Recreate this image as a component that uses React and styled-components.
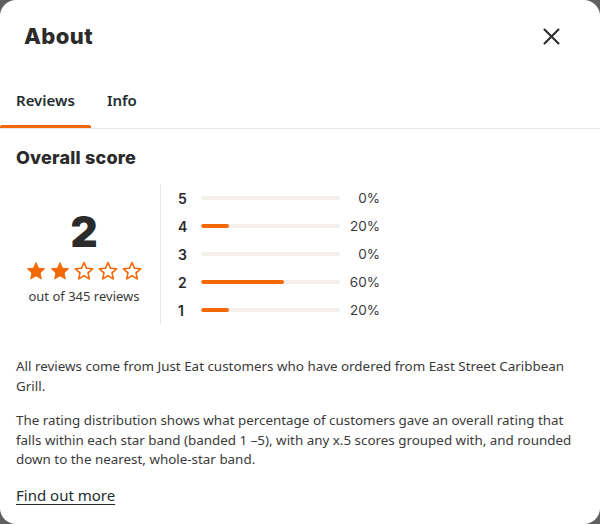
import styled, { createGlobalStyle } from "styled-components";

const GlobalStyle = createGlobalStyle`
  html, body {
    margin: 0;
    padding: 0;
    background: #5f5f5f;
  }
  body {
    font-family: "Noto Sans", "Open Sans", sans-serif;
    color: #242e30;
  }
`;

const orange = "#f36805";

const Modal = styled.div`
  width: 600px;
  height: 524px;
  background: #fff;
  border-radius: 16px;
  overflow: hidden;
  box-sizing: border-box;
`;

const Header = styled.header`
  display: flex;
  justify-content: space-between;
  align-items: center;
  height: 72px;
  padding: 0 34px 0 24px;
`;

const Title = styled.h1`
  margin: 0;
  font-family: "Inter", sans-serif;
  font-weight: 800;
  font-size: 22px;
  letter-spacing: 0.4px;
  color: #2b2b2b;
`;

const CloseButton = styled.button`
  border: none;
  background: none;
  padding: 0;
  width: 30px;
  height: 30px;
  display: flex;
  align-items: center;
  justify-content: center;
  cursor: pointer;
  color: #2b2b2b;
`;

const TabList = styled.nav`
  display: flex;
  height: 56px;
  border-bottom: 1px solid #e8e8e8;
`;

const Tab = styled.button`
  border: none;
  background: none;
  padding: 0 16px;
  font-family: "Noto Sans", sans-serif;
  font-size: 15px;
  font-weight: 600;
  color: #242e30;
  position: relative;
  cursor: pointer;

  &::after {
    content: "";
    position: absolute;
    left: 0;
    right: 0;
    bottom: 0;
    height: 3px;
    border-radius: 2px 2px 0 0;
    background: ${(p) => (p.$active ? orange : "transparent")};
  }
`;

const Content = styled.section`
  padding: 17px 16px 0;
`;

const SectionTitle = styled.h2`
  margin: 0;
  font-family: "Inter", sans-serif;
  font-weight: 800;
  font-size: 18px;
  letter-spacing: 0.2px;
  line-height: 24px;
  color: #2b2b2b;
`;

const ScoreBlock = styled.div`
  display: flex;
  margin-top: 14px;
`;

const Summary = styled.div`
  width: 136px;
  padding-right: 8px;
  border-right: 1px solid #e8e8e8;
  display: flex;
  flex-direction: column;
  align-items: center;
  justify-content: center;
  padding-top: 6px;
`;

const BigScore = styled.div`
  font-family: "Inter", sans-serif;
  font-weight: 900;
  font-size: 42px;
  line-height: 44px;
  color: #2b2b2b;
`;

const Stars = styled.div`
  display: flex;
  gap: 4px;
  margin-top: 7px;
`;

const ReviewCount = styled.div`
  margin-top: 6px;
  font-size: 13px;
  color: #3a3a3a;
`;

const Distribution = styled.div`
  padding-left: 17px;
  display: flex;
  flex-direction: column;
`;

const Row = styled.div`
  display: grid;
  grid-template-columns: 23px 139px 40px;
  align-items: center;
  height: 28px;
`;

const Band = styled.span`
  font-family: "Inter", sans-serif;
  font-weight: 600;
  font-size: 14px;
  color: #2b2b2b;
`;

const Track = styled.div`
  height: 4px;
  border-radius: 2px;
  background: #f3f0ec;
  overflow: hidden;
`;

const Fill = styled.div`
  height: 100%;
  border-radius: 2px;
  background: ${orange};
`;

const Percent = styled.span`
  text-align: right;
  font-family: "Inter", sans-serif;
  font-size: 13.5px;
  color: #3a3a3a;
`;

const Paragraph = styled.p`
  margin: ${(p) => (p.$first ? "33px" : "14.6px")} 0 0;
  font-size: 13.4px;
  line-height: 19.7px;
  color: #3a3a3a;
`;

const MoreLink = styled.a`
  display: inline-block;
  margin-top: 15px;
  font-size: 15px;
  color: #242e30;
  text-decoration: underline;
  text-underline-offset: 3px;
`;

const starPath =
  "M10 1.6l2.5 5.6 6.1.6-4.6 4.1 1.3 6-5.3-3.1-5.3 3.1 1.3-6L1.4 7.8l6.1-.6z";

const Star = ({ filled }) => (
  <svg width="20" height="20" viewBox="0 0 20 20">
    <path
      d={starPath}
      fill={filled ? orange : "none"}
      stroke={orange}
      strokeWidth={filled ? 1 : 1.6}
      strokeLinejoin="round"
    />
  </svg>
);

const bands = [
  { band: 5, pct: 0 },
  { band: 4, pct: 20 },
  { band: 3, pct: 0 },
  { band: 2, pct: 60 },
  { band: 1, pct: 20 },
];

export default function App() {
  const score = 2;
  return (
    <>
      <GlobalStyle />
      <Modal>
        <Header>
          <Title>About</Title>
          <CloseButton aria-label="Close">
            <svg width="17" height="17" viewBox="0 0 17 17">
              <path
                d="M1.5 1.5l14 14M15.5 1.5l-14 14"
                stroke="currentColor"
                strokeWidth="2.1"
                strokeLinecap="round"
              />
            </svg>
          </CloseButton>
        </Header>

        <TabList>
          <Tab $active>Reviews</Tab>
          <Tab>Info</Tab>
        </TabList>

        <Content>
          <SectionTitle>Overall score</SectionTitle>

          <ScoreBlock>
            <Summary>
              <BigScore>{score}</BigScore>
              <Stars>
                {[1, 2, 3, 4, 5].map((i) => (
                  <Star key={i} filled={i <= score} />
                ))}
              </Stars>
              <ReviewCount>out of 345 reviews</ReviewCount>
            </Summary>

            <Distribution>
              {bands.map((b) => (
                <Row key={b.band}>
                  <Band>{b.band}</Band>
                  <Track>
                    <Fill style={{ width: `${b.pct}%` }} />
                  </Track>
                  <Percent>{b.pct}%</Percent>
                </Row>
              ))}
            </Distribution>
          </ScoreBlock>

          <Paragraph $first>
            All reviews come from Just Eat customers who have ordered from East
            Street Caribbean Grill.
          </Paragraph>
          <Paragraph>
            The rating distribution shows what percentage of customers gave an
            overall rating that falls within each star band (banded 1 –5), with
            any x.5 scores grouped with, and rounded down to the nearest,
            whole-star band.
          </Paragraph>
          <MoreLink href="#">Find out more</MoreLink>
        </Content>
      </Modal>
    </>
  );
}
